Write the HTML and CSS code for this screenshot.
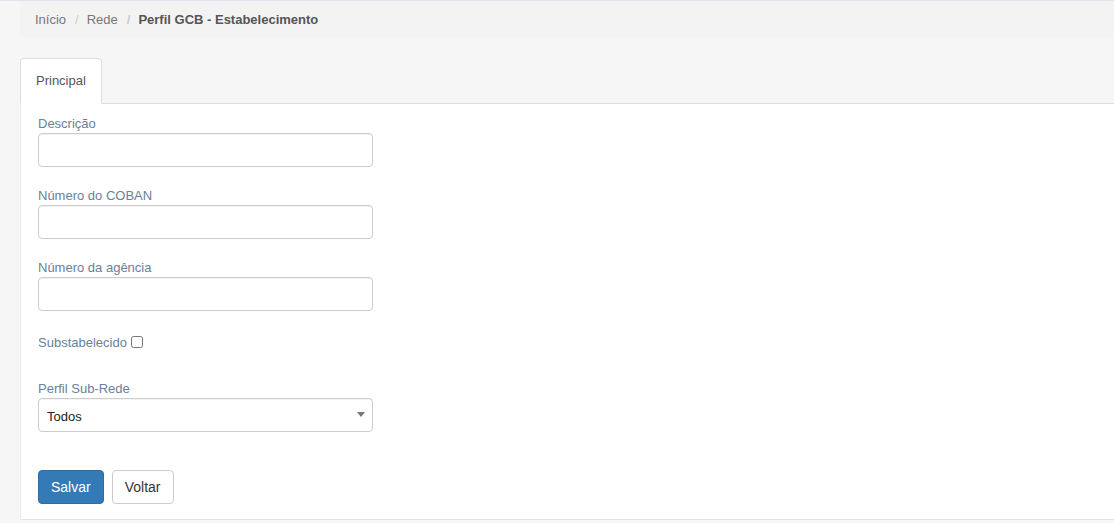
FILE: index.html
```html
<!DOCTYPE html>
<html>
<head>
    <title>Perfil GCB - Estabelecimento</title>
    <link rel="stylesheet" href="styles.css">
</head>
<body>
    <div class="page">
        <ol class="breadcrumb">
            <li><a href="#">Início</a></li>
            <li><a href="#">Rede</a></li>
            <li class="active">Perfil GCB - Estabelecimento</li>
        </ol>

        <ul class="tabs">
            <li class="tab active">Principal</li>
        </ul>

        <form class="panel">
            <div class="form-group">
                <label for="descricao">Descrição</label>
                <input type="text" id="descricao" class="form-control">
            </div>
            <div class="form-group">
                <label for="coban">Número do COBAN</label>
                <input type="text" id="coban" class="form-control">
            </div>
            <div class="form-group">
                <label for="agencia">Número da agência</label>
                <input type="text" id="agencia" class="form-control">
            </div>
            <div class="form-group check-group">
                <label for="subst">Substabelecido</label>
                <input type="checkbox" id="subst" class="check">
            </div>
            <div class="form-group">
                <label for="subrede">Perfil Sub-Rede</label>
                <div class="select-wrap">
                    <select id="subrede" class="form-control">
                        <option>Todos</option>
                    </select>
                </div>
            </div>
            <div class="actions">
                <button type="button" class="btn btn-primary">Salvar</button>
                <button type="button" class="btn btn-default">Voltar</button>
            </div>
        </form>
    </div>
</body>
</html>
```

FILE: styles.css
```css
body {
    margin: 0;
    padding: 0;
    background: #f6f6f6;
    border-top: 1px solid #dfe4ea;
    font-family: "Liberation Sans", Arial, sans-serif;
    font-size: 13px;
    color: #333;
}

.page {
    padding-left: 20px;
}

/* Breadcrumb */
.breadcrumb {
    display: flex;
    align-items: center;
    height: 36px;
    margin: 0;
    padding: 0 15px;
    list-style: none;
    background: #f3f3f3;
}

.breadcrumb li {
    color: #777;
}

.breadcrumb li + li::before {
    content: "/";
    color: #ccc;
    padding: 0 8px 0 9px;
}

.breadcrumb a {
    color: #777;
    text-decoration: none;
}

.breadcrumb .active {
    color: #555;
    font-weight: bold;
}

/* Abas */
.tabs {
    display: flex;
    margin: 21px 0 0;
    padding: 0;
    list-style: none;
    border-bottom: 1px solid #ddd;
}

.tab {
    padding: 0 15px;
    height: 44px;
    line-height: 44px;
    margin-bottom: -1px;
    color: #555;
    border: 1px solid transparent;
    border-radius: 4px 4px 0 0;
}

.tab.active {
    background: #fff;
    border-color: #ddd;
    border-bottom-color: #fff;
}

/* Formulario */
.panel {
    background: #fff;
    border-left: 1px solid #e9ecf0;
    border-bottom: 1px solid #e3e3e3;
    padding: 11px 17px 15px;
}

.form-group {
    margin-bottom: 20px;
}

.form-group label {
    display: block;
    color: #6b809b;
    line-height: 18px;
    margin-bottom: 0;
}

.form-control {
    display: block;
    box-sizing: border-box;
    width: 335px;
    height: 34px;
    padding: 6px 8px;
    border: 1px solid #ccc;
    border-radius: 4px;
    background: #fff;
    font-family: inherit;
    font-size: 13px;
    color: #222;
    box-shadow: inset 0 1px 1px rgba(0,0,0,0.05);
}

.check-group {
    display: flex;
    align-items: center;
    margin-top: 23px;
    margin-bottom: 28px;
}

.check-group label {
    display: inline;
}

.check {
    width: 12px;
    height: 12px;
    margin: 0 0 2px 4px;
}

.select-wrap {
    position: relative;
    width: 335px;
}

.select-wrap select {
    -webkit-appearance: none;
    appearance: none;
    padding-top: 9px;
}

.select-wrap::after {
    content: "";
    position: absolute;
    right: 8px;
    top: 14px;
    border-left: 4px solid transparent;
    border-right: 4px solid transparent;
    border-top: 5px solid #777;
}

.actions {
    display: flex;
    gap: 8px;
    padding-top: 18px;
}

.btn {
    height: 34px;
    padding: 0 12px;
    border: 1px solid transparent;
    border-radius: 4px;
    font-family: inherit;
    font-size: 14px;
    cursor: pointer;
}

.btn-primary {
    background: #337ab7;
    border-color: #2e6da4;
    color: #fff;
}

.btn-default {
    background: #fff;
    border-color: #ccc;
    color: #333;
}
```
